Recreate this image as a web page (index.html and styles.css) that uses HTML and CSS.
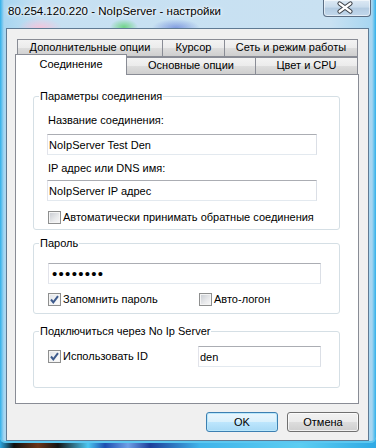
FILE: index.html
```html
<!DOCTYPE html>
<html lang="ru">
<head>
    <meta charset="UTF-8">
    <meta name="viewport" content="width=device-width, initial-scale=1.0">
    <title>80.254.120.220 - NoIpServer - настройки</title>
    <link rel="stylesheet" href="styles.css">
</head>
<body>
    <div class="window">
        <div class="titlebar">
            <span class="title">80.254.120.220 - NoIpServer - настройки</span>
            <button class="close" title="Закрыть">
                <svg width="48" height="17" viewBox="0 0 48 17">
                    <path d="M16.5 3.5 L27.5 11.5 M16.5 11.5 L27.5 3.5" stroke="#3a3f46" stroke-width="4.2" stroke-linecap="round"/>
                    <path d="M16.5 3.5 L27.5 11.5 M16.5 11.5 L27.5 3.5" stroke="#fff" stroke-width="2.2" stroke-linecap="round"/>
                </svg>
            </button>
        </div>

        <div class="client">
            <div class="tabs">
                <div class="tab-row back">
                    <div class="tab t-extra">Дополнительные опции</div>
                    <div class="tab t-cursor">Курсор</div>
                    <div class="tab t-net">Сеть и режим работы</div>
                </div>
                <div class="tab-row front">
                    <div class="tab active t-conn">Соединение</div>
                    <div class="tab t-main">Основные опции</div>
                    <div class="tab t-color">Цвет и CPU</div>
                </div>
            </div>

            <div class="panel">
                <fieldset class="group g-conn">
                    <legend>Параметры соединения</legend>
                    <label class="lbl first">Название соединения:</label>
                    <input class="edit" type="text" value="NoIpServer Test Den">
                    <label class="lbl">IP адрес или DNS имя:</label>
                    <input class="edit edit-ip" type="text" value="NoIpServer IP адрес">
                    <label class="check row-auto"><span class="box"></span>Автоматически принимать обратные соединения</label>
                </fieldset>

                <fieldset class="group g-pass">
                    <legend>Пароль</legend>
                    <input class="edit edit-pass" type="password" value="12345678">
                    <div class="opt-row">
                        <label class="check"><span class="box checked"><svg width="11" height="11" viewBox="0 0 11 11"><path d="M2 5.5 L4.3 8.3 L9 2.2" fill="none" stroke="#3d5a8c" stroke-width="2"/></svg></span>Запомнить пароль</label>
                        <label class="check"><span class="box"></span>Авто-логон</label>
                    </div>
                </fieldset>

                <fieldset class="group g-server">
                    <legend>Подключиться через No Ip Server</legend>
                    <div class="opt-row id-row">
                        <label class="check"><span class="box checked"><svg width="11" height="11" viewBox="0 0 11 11"><path d="M2 5.5 L4.3 8.3 L9 2.2" fill="none" stroke="#3d5a8c" stroke-width="2"/></svg></span>Использовать ID</label>
                        <input class="edit edit-id" type="text" value="den">
                    </div>
                </fieldset>
            </div>

            <div class="buttons">
                <button class="btn default">OK</button>
                <button class="btn">Отмена</button>
            </div>
        </div>
    </div>
</body>
</html>
```

FILE: styles.css
```css
* {
    box-sizing: border-box;
}
html, body {
    margin: 0;
}
body {
    width: 376px;
    height: 448px;
    overflow: hidden;
    font-family: "Liberation Sans", Arial, sans-serif;
    font-size: 11px;
    color: #000;
    background: linear-gradient(90deg, #2aa6e0 0, #101010 14px, #6b3418 38px, #141414 58px, #4cc6f0 88px, #1d4fb0 105px, #6f9fe6 128px, #1e3f9a 150px, #3fb4ea 200px, #5ccdf2 300px, #2fa9e4 376px);
}

/* window frame (aero glass) */
.window {
    height: 443px;
    padding: 0 7px 2px 6px;
    border-radius: 0 0 5px 5px;
    background:
        radial-gradient(ellipse 22px 10px at 40px 28px, rgba(255, 190, 215, 0.8), transparent),
        radial-gradient(ellipse 14px 8px at 124px 27px, rgba(90, 210, 110, 0.8), transparent),
        radial-gradient(ellipse 24px 9px at 176px 28px, rgba(70, 100, 210, 0.55), transparent),
        linear-gradient(90deg, #2fb0ea 0, #a7d6f1 4px, #c6e0f2 40px, #c9e1f2 330px, #a7d6f1 372px, #2fb0ea 376px);
    box-shadow: inset 0 -2px 0 #5bc7f0;
}
.titlebar {
    height: 28px;
    display: flex;
    align-items: flex-start;
}
.title {
    padding: 4px 0 0 2px;
    font-size: 11.5px;
    line-height: 14px;
    text-shadow: 0 0 5px #fff, 0 0 3px #fff;
}
.close {
    margin: 0 -2px 0 auto;
    width: 48px;
    height: 17px;
    padding: 0;
    border: 1px solid #5b6e84;
    border-top: none;
    border-radius: 0 0 4px 4px;
    background: linear-gradient(#dde9f4, #c8dbec 45%, #b3cbe1 50%, #c2d8ec);
    box-shadow: inset 0 0 0 1px rgba(255, 255, 255, 0.55);
}
.close svg {
    display: block;
    margin-left: -1px;
}

/* client area */
.client {
    height: 413px;
    border: 1px solid #5f7a93;
    background: #f0f0f0;
    padding: 10px 9px 0 8px;
}

/* tabs */
.tabs {
    width: 344px;
}
.tab-row {
    display: flex;
    align-items: flex-end;
}
.tab-row.back {
    height: 18px;
    padding-left: 2px;
}
.tab-row.front {
    height: 21px;
    margin-top: -3px;
    margin-bottom: -1px;
    position: relative;
    z-index: 2;
}
.tab {
    height: 18px;
    border: 1px solid #898c95;
    margin-left: -1px;
    background: linear-gradient(#f3f3f3, #ebebeb 50%, #dddddd 50%, #cfcfcf);
    text-align: center;
    line-height: 15px;
    white-space: nowrap;
}
.tab:first-child {
    margin-left: 0;
}
.tab.active {
    height: 21px;
    border-bottom: none;
    background: #fff;
    line-height: 19px;
}
.t-extra { width: 146px; }
.t-cursor { width: 63px; }
.t-net { width: 134px; }
.t-conn { width: 112px; }
.t-main { width: 130px; }
.t-color { width: 103px; }

.panel {
    height: 330px;
    border: 1px solid #898c95;
    background: #fff;
    padding: 15px 18px 0 17px;
}

/* group boxes */
.group {
    margin: 0;
    min-width: 0;
    border: 1px solid #d5dfe5;
    border-radius: 3px;
    padding: 0 0 0 14px;
}
.group legend {
    margin-left: -9px;
    padding: 0 1px;
    line-height: 13px;
}
.g-conn {
    padding-bottom: 5px;
}
.g-pass {
    margin-top: 7px;
    padding-bottom: 7px;
}
.g-server {
    margin-top: 11px;
    padding-bottom: 20px;
}

.lbl {
    display: block;
    line-height: 13px;
    margin-top: 7px;
}
.lbl.first {
    margin-top: 11px;
}
.edit {
    display: block;
    width: 270px;
    height: 21px;
    margin: 7px 0 0 -1px;
    padding: 0 1px;
    border: 1px solid;
    border-color: #abadb3 #dbdfe6 #e3e9ef #e2e3ea;
    font-family: inherit;
    font-size: 11px;
    color: #000;
    background: #fff;
    outline: none;
}
.edit-ip {
    margin-top: 5px;
}
.edit-pass {
    width: 273px;
    margin: 13px 0 0 0;
    padding-left: 3px;
    font-size: 15px;
    letter-spacing: 1.3px;
}
.edit-id {
    width: 123px;
    margin: 0;
}

/* checkboxes */
.check {
    display: flex;
    align-items: center;
    gap: 2px;
    line-height: 13px;
    white-space: nowrap;
}
.row-auto {
    margin-top: 10px;
}
.box {
    width: 13px;
    height: 13px;
    flex: none;
    border: 1px solid #8e8f8f;
    background: linear-gradient(135deg, #c6cad0, #e9eaec 60%, #f8f8f8);
    box-shadow: inset 0 0 0 1px #f4f4f4;
}
.box.checked {
    background: linear-gradient(135deg, #dfe2e6, #f4f5f6 60%, #fdfdfd);
}
.box svg {
    display: block;
}
.opt-row {
    display: grid;
    grid-template-columns: 151px auto;
    align-items: center;
    margin-top: 9px;
}
.id-row {
    grid-template-columns: 150px auto;
    margin-top: 8px;
}

/* dialog buttons */
.buttons {
    display: flex;
    justify-content: flex-end;
    gap: 9px;
    margin-top: 8px;
}
.btn {
    width: 72px;
    height: 20px;
    padding: 0;
    border: 1px solid #707070;
    border-radius: 3px;
    background: linear-gradient(#f2f2f2, #ebebeb 50%, #dddddd 50%, #cfcfcf);
    box-shadow: inset 0 0 0 1px rgba(255, 255, 255, 0.7);
    font-family: inherit;
    font-size: 11px;
    color: #000;
}
.btn.default {
    border-color: #3c7fb1;
    background: linear-gradient(#eaf6fd, #d9f0fc 50%, #bee6fd 50%, #a7d9f5);
    box-shadow: inset 0 0 0 1px #b9e7fb;
}
```
